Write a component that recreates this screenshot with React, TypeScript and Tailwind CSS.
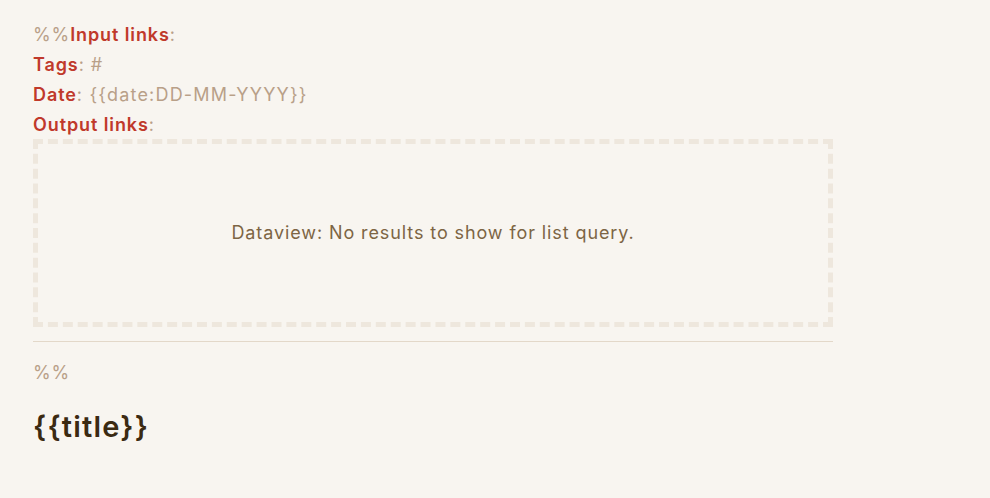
export default function App() {
  return (
    <div className="min-h-screen w-full bg-[#f8f5f0] font-['Inter',sans-serif] text-[18px] tracking-[0.9px]">
      <div className="w-[800px] ml-[33px] pt-[20px]">
        <div className="leading-[30px]">
          <div>
            <span className="text-[#b9a088]">%%</span>
            <span className="font-semibold text-[#c0392b]">Input links</span>
            <span className="text-[#b9a088]">:</span>
          </div>
          <div>
            <span className="font-semibold text-[#c0392b]">Tags</span>
            <span className="text-[#b9a088]">: #</span>
          </div>
          <div>
            <span className="font-semibold text-[#c0392b]">Date</span>
            <span className="text-[#b9a088] tracking-[1.2px]">: {'{{date:DD-MM-YYYY}}'}</span>
          </div>
          <div>
            <span className="font-semibold text-[#c0392b]">Output links</span>
            <span className="text-[#b9a088]">:</span>
          </div>
        </div>

        {/* dataview block */}
        <div className="-mt-[1px] h-[188px] border-[5px] border-dashed border-[#eee7dd] flex items-center justify-center">
          <span className="text-[#7d6544] -mt-[2px]">Dataview: No results to show for list query.</span>
        </div>

        <div className="mt-[14px] h-px bg-[#e3d8c9]" />

        <div className="mt-[16px] leading-[30px] text-[#b9a088]">%%</div>

        <div className="mt-[21px] text-[29px] font-semibold leading-[36px] tracking-[1.2px] text-[#3b2a12]">{'{{title}}'}</div>
      </div>
    </div>
  )
}
